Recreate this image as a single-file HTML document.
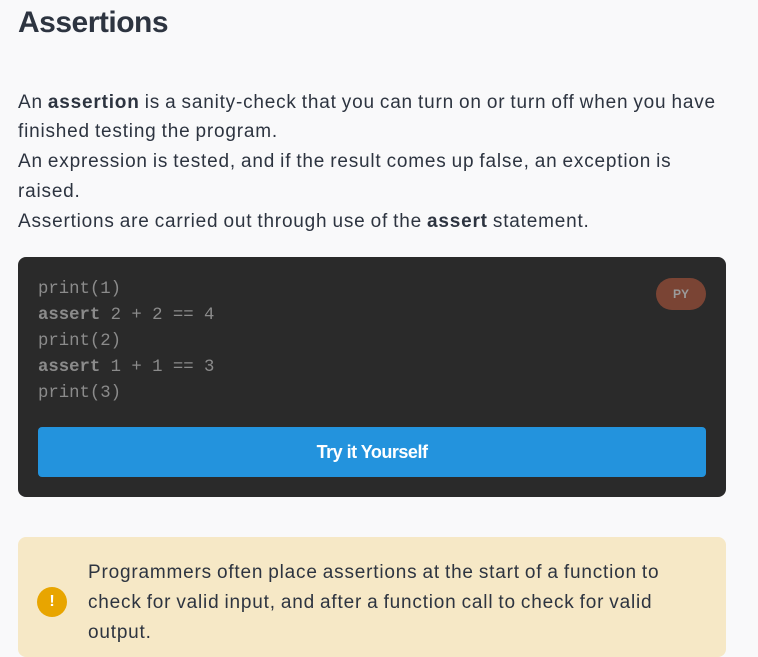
<!DOCTYPE html>
<html><head><meta charset="utf-8"><style>
html,body{margin:0;padding:0;background:#f9f9fa;width:758px;height:639px;overflow:hidden;font-family:"Liberation Sans",sans-serif;color:#2d3440}
h1{position:absolute;left:18px;top:4px;margin:0;font-size:30px;font-weight:bold;letter-spacing:-0.5px;line-height:38px;color:#2d3440}
.p{position:absolute;left:18px;font-size:19px;letter-spacing:0.8px;word-spacing:-1px;line-height:30px;white-space:nowrap}
.code{position:absolute;left:18px;top:257px;width:708px;height:240px;background:#2a2a2a;border-radius:8px}
.cl{position:absolute;left:20px;font-family:"Liberation Mono",monospace;font-size:17.3px;color:#8b8b8b;line-height:26px}
.badge{position:absolute;left:638px;top:21px;width:50px;height:32px;border-radius:16px;background:#7a4434;color:#9b9b9b;font-size:12px;font-weight:bold;text-align:center;line-height:32px}
.btn{position:absolute;left:20px;top:170px;width:668px;height:50px;border-radius:4px;background:#2393dd;color:#fff;font-weight:bold;font-size:18px;text-align:center;line-height:50px;letter-spacing:-0.5px}
.note{position:absolute;left:18px;top:537px;width:708px;height:120px;background:#f6e8c6;border-radius:8px}
.ic{position:absolute;left:37px;top:587px;width:30px;height:30px;border-radius:50%;background:#e8a500;color:#fff;font-weight:bold;font-size:16px;text-align:center;line-height:30px}
</style></head><body>
<h1>Assertions</h1>
<div class="p" style="top:88px">An <b>assertion</b> is a sanity-check that you can turn on or turn off when you have</div>
<div class="p" style="top:117px">finished testing the program.</div>
<div class="p" style="top:147px">An expression is tested, and if the result comes up false, an exception is</div>
<div class="p" style="top:177px">raised.</div>
<div class="p" style="top:207px">Assertions are carried out through use of the <b>assert</b> statement.</div>
<div class="code">
<div class="cl" style="top:20px">print(1)</div>
<div class="cl" style="top:46px"><b>assert</b> 2 + 2 == 4</div>
<div class="cl" style="top:72px">print(2)</div>
<div class="cl" style="top:98px"><b>assert</b> 1 + 1 == 3</div>
<div class="cl" style="top:124px">print(3)</div>
<div class="badge">PY</div>
<div class="btn">Try it Yourself</div>
</div>
<div class="note"></div>
<div class="ic">!</div>
<div class="p" style="left:88px;top:558px">Programmers often place assertions at the start of a function to</div>
<div class="p" style="left:88px;top:588px">check for valid input, and after a function call to check for valid</div>
<div class="p" style="left:88px;top:618px">output.</div>
</body></html>
